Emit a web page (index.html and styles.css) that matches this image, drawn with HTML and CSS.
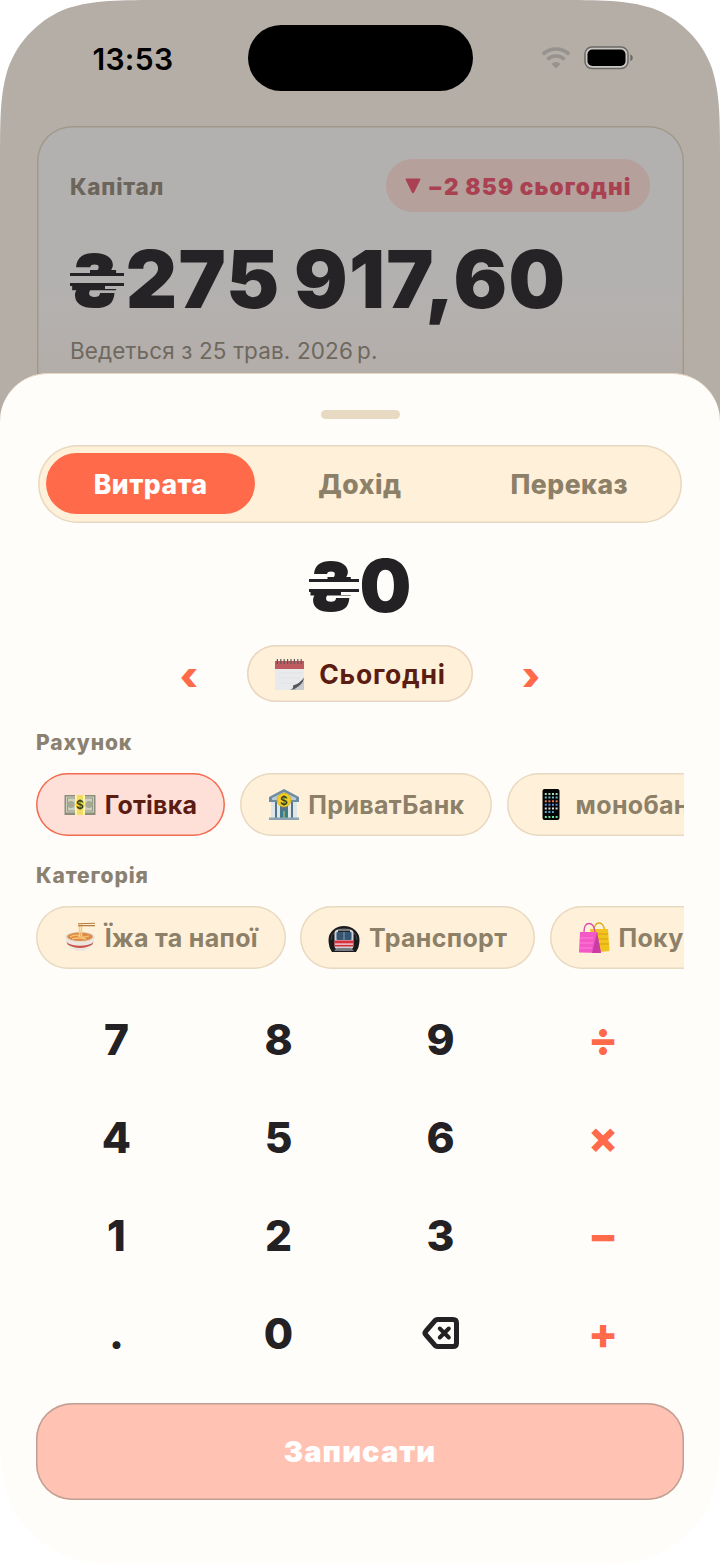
FILE: index.html
```html
<!DOCTYPE html>
<html lang="uk">
<head>
<meta charset="utf-8">
<title>Витрата</title>
<link rel="stylesheet" href="styles.css">
</head>
<body>
<div class="phone">
  <header class="status">
    <div class="time">13:53</div>
    <div class="island"></div>
    <div class="indicators">
      <svg class="wifi" width="30" height="22" viewBox="0 0 30 22" fill="none" stroke="#96928d" stroke-width="3.6"><path d="M1.700 7.300a19.500 19.500 0 0 1 26.600 0"/><path d="M6.400 12.500a12.500 12.500 0 0 1 17.200 0"/><path d="M15 21.600l-4.600-4.600a6.500 6.500 0 0 1 9.200 0z" fill="#96928d" stroke="none"/></svg>
      <svg class="battery" width="50" height="24" viewBox="0 0 50 24"><rect x="1" y="1" width="43" height="21.500" rx="7" fill="#c9c5c0" stroke="#6b6865" stroke-width="1.500"/><rect x="3.500" y="3.500" width="38" height="16.500" rx="4.800" fill="#000"/><path d="M46.300 8.300q2.500 1 2.500 3.500t-2.500 3.500z" fill="#6b6865"/></svg>
    </div>
  </header>
  <section class="capital">
    <div class="capital-head">
      <span class="capital-title">Капітал</span>
      <span class="delta"><svg width="16" height="16" viewBox="0 0 16 16"><path d="M1.500.6h13q1.300.2.7 1.500L9.200 14.300q-1.200 2-2.400 0L.8 2.100Q.2.8 1.500.6z" fill="#a94152"/></svg><span>−2 859 сьогодні</span></span>
    </div>
    <div class="capital-sum"><span class="uah"><span class="uah-sign">₴</span></span>275 917,60</div>
    <div class="since">Ведеться з 25 трав. 2026&#8239;р.</div>
  </section>
  <main class="sheet">
    <div class="handle"></div>
    <nav class="tabs">
      <button class="tab active">Витрата</button>
      <button class="tab">Дохід</button>
      <button class="tab">Переказ</button>
    </nav>
    <div class="entry"><span class="uah"><span class="uah-sign">₴</span></span>0</div>
    <div class="date-row">
      <button class="step">‹</button>
      <button class="date">
        <svg width="32" height="32" viewBox="0 0 32 32"><path d="M1 3h29v20l-9 9H1z" fill="#e9eaec"/><path d="M30 20v12H16q10-2 14-12z" fill="#d5d6d9"/><path d="M1 3h29v8H1z" fill="#bd5b60"/><path d="M4 15h24M4 20h22M4 25h16" stroke="#dfe1e4" stroke-width=".8"/><path d="M15 31.500q5 0 4-4 7-2 11-8-1 8-8 12z" fill="#55585c"/><path d="M19 31.500q7-3 11-9v9.500z" fill="#c8cacd"/><path d="M3.400 1v5M6.800 1v5M10.200 1v5M13.600 1v5M17 1v5M20.400 1v5M23.800 1v5M27.200 1v5" stroke="#665355" stroke-width="1.200"/></svg>
        <span>Сьогодні</span>
      </button>
      <button class="step">›</button>
    </div>
    <h2 class="label">Рахунок</h2>
    <div class="chips">
      <button class="chip selected">
        <svg width="32" height="32" viewBox="0 0 32 32"><rect x=".5" y="6" width="31" height="20" fill="#8c8e7c"/><rect x="2" y="7.500" width="28" height="16" fill="#cfd0bd"/><rect x="3.500" y="9" width="25" height="13" fill="none" stroke="#969985"/><circle cx="7" cy="15.500" r="3.500" fill="#a6a994"/><circle cx="25" cy="15.500" r="3.500" fill="#a6a994"/><path d="M11 6h10v20H11z" fill="#f1dc65"/><path d="M11 6h2v20h-2zM19 6h2v20h-2z" fill="#fff3ac"/><circle cx="16" cy="15.500" r="4.500" fill="#f5d835"/><text x="16" y="20" class="coin">$</text></svg>
        <span>Готівка</span>
      </button>
      <button class="chip">
        <svg width="32" height="32" viewBox="0 0 32 32"><path d="M16 0L31 8v5H1V8z" fill="#6e8da2"/><path d="M16 3l12 6v2H4V9z" fill="#b9cbd5"/><path d="M3 13h26v17H3z" fill="#54748a"/><path d="M3 13h4v16H3zM9 13h3v16H9zM20 13h3v16h-3zM25 13h4v16h-4z" fill="#e0e5e8"/><path d="M12.500 22h7v8h-7z" fill="#347f90"/><path d="M15.500 22h1v8h-1z" fill="#e7c84b"/><path d="M1 28.500h30V31H1z" fill="#8ca4b1"/><circle cx="16" cy="11" r="7" fill="#f3cc24" stroke="#caa31a" stroke-width=".6"/><text x="16" y="15.500" class="coin">$</text></svg>
        <span>ПриватБанк</span>
      </button>
      <button class="chip">
        <svg width="32" height="32" viewBox="0 0 32 32"><rect x="7.500" y="0" width="17" height="31" rx="2" fill="#050505"/><g fill="none" stroke-width="2" stroke-dasharray="2 1.600"><path d="M9.800 5h13" stroke="#a8d9ba"/><path d="M9.800 8.600h13" stroke="#6fb8c9"/><path d="M9.800 12.200h13" stroke="#e07a59"/><path d="M9.800 15.800h13" stroke="#5d8ddd"/><path d="M9.800 19.400h13" stroke="#d8ddd9"/><path d="M9.800 23h9" stroke="#5aa6c8"/><path d="M9.800 28h13" stroke="#6ce29b"/></g></svg>
        <span>монобанк</span>
      </button>
    </div>
    <h2 class="label category">Категорія</h2>
    <div class="chips">
      <button class="chip">
        <svg width="32" height="32" viewBox="0 0 32 32"><path d="M1.500 15q0 9 8 12.500l2 1.500h9l2-1.500q8-3.500 8-12.500z" fill="#ece6df"/><path d="M2.500 20q4 3.800 13.500 3.800T29.500 20l-1.200 2.600Q23 26 16 26T3.700 22.600z" fill="#c9524b"/><ellipse cx="16" cy="14.800" rx="14.500" ry="5.300" fill="#e3ded8"/><ellipse cx="16" cy="14.800" rx="12.800" ry="4.200" fill="#df8b45"/><path d="M6 15q5-3 9-1t10 0M8 17q5-2 14 0" stroke="#f4c577" stroke-width="1.300" fill="none"/><path d="M15.500 15V2.500M17.500 14V2.500" stroke="#f0d184" stroke-width="1.500"/><path d="M14 1.800l17-.5M14 3.600h17" stroke="#b87b3e" stroke-width="1.100"/></svg>
        <span>Їжа та напої</span>
      </button>
      <button class="chip">
        <svg width="32" height="32" viewBox="0 0 32 32"><path d="M.5 18a15.500 14 0 0 1 31 0q0 7-3.500 12H4Q.5 25 .5 18z" fill="#191a1c"/><path d="M3 18a13 11.500 0 0 1 26 0" stroke="#46484b" fill="none"/><rect x="6.500" y="7.500" width="19" height="20" rx="4" fill="#cbd1d6"/><rect x="8.500" y="10" width="15" height="8" rx="1" fill="#345574"/><path d="M10 8.500h12v1.500H10z" fill="#252525"/><path d="M15.500 10h1v8h-1z" fill="#8fa2b2"/><path d="M6.500 18.500h19v6h-19z" fill="#d92e3d"/><path d="M7 21.500h18v1.200H7z" fill="#eee"/><path d="M6 29l3-3h14l3 3z" fill="#777b80"/></svg>
        <span>Транспорт</span>
      </button>
      <button class="chip">
        <svg width="32" height="32" viewBox="0 0 32 32"><path d="M16 10q0-9 5-9t6 9" stroke="#ddac1b" fill="none" stroke-width="1.300"/><path d="M12 7h18l1.500 22-9 1-7-1z" fill="#f0c31d"/><path d="M12 12h18M12 17h18M12 22h19" stroke="#d99d14"/><path d="M6 10q0-8.500 5-8.500t6 8.500" stroke="#dc4fab" fill="none" stroke-width="1.300"/><path d="M2 10h17l4 21-22-.5z" fill="#f259c5"/><path d="M19 10l4 21h-9z" fill="#c83ca4"/><path d="M2 16h13M2 21h13M2 26h12" stroke="#ff7fda"/></svg>
        <span>Покупки</span>
      </button>
    </div>
    <div class="keypad">
      <button class="key">7</button><button class="key">8</button><button class="key">9</button><button class="key op">÷</button>
      <button class="key">4</button><button class="key">5</button><button class="key">6</button><button class="key op">×</button>
      <button class="key">1</button><button class="key">2</button><button class="key">3</button><button class="key op">−</button>
      <button class="key">.</button><button class="key">0</button>
      <button class="key"><svg width="38" height="34" viewBox="0 0 38 34" fill="none" stroke="#232123" stroke-linecap="round" stroke-linejoin="round"><path d="M15.500 3.500H31q3.500 0 3.500 3.500v20q0 3.500-3.500 3.500H15.500q-1.500 0-2.700-1.300L4 19q-2-2 0-4l8.800-10.200q1.200-1.300 2.700-1.300z" stroke-width="5"/><path d="M17.800 12.500l9 9M26.800 12.500l-9 9" stroke-width="4"/></svg></button>
      <button class="key op">+</button>
    </div>
    <button class="save">Записати</button>
  </main>
</div>
</body>
</html>
```
FILE: styles.css
```css
*, *::before, *::after { box-sizing: border-box; }
body { margin: 0; background: #fff; font-family: Inter, "Liberation Sans", sans-serif; }
button { font: inherit; border: 0; padding: 0; background: none; color: inherit; }
svg { display: block; flex: none; }

.phone {
  width: 720px; height: 1565px; overflow: hidden; background: linear-gradient(#b4aea7 500px, #fffdf9 500px);
  display: flex; flex-direction: column;
  clip-path: path("M165 0C117.600 0 93.800 0 68.200 8.100C40.300 18.300 18.300 40.300 8.100 68.200C0 93.800 0 117.600 0 165V1400C0 1447.400 0 1471.200 8.100 1496.800C18.300 1524.700 40.300 1546.700 68.200 1556.900C93.800 1565 117.600 1565 165 1565H555C602.400 1565 626.200 1565 651.800 1556.900C679.700 1546.700 701.700 1524.700 711.900 1496.800C720 1471.200 720 1447.400 720 1400V165C720 117.600 720 93.800 711.900 68.200C701.700 40.300 679.700 18.300 651.800 8.100C626.200 0 602.400 0 555 0Z");
}

.status { height: 126px; flex: none; display: flex; align-items: flex-start; padding-top: 25px; }
.time { width: 248px; padding-left: 92.500px; height: 67px; line-height: 68px; font-size: 30px; font-weight: 600; color: #000; letter-spacing: .3px; }
.island { width: 224.500px; height: 66px; border-radius: 33px; background: #000; }
.indicators { display: flex; align-items: center; height: 66px; padding-left: 68px; gap: 13px; }

.capital {
  height: 267px; margin: 0 36.500px -20px; flex: none; padding: 33px 33.500px 0;
  box-shadow: inset 0 0 0 1.500px #a19988; border-radius: 35px 35px 0 0;
  background: linear-gradient(#b3b1b0 60%, #b4ada8);
}
.capital-head { display: flex; justify-content: space-between; align-items: center; height: 53px; }
.capital-title { font-size: 22.500px; font-weight: 800; color: #6b655b; letter-spacing: .75px; padding-top: 1px; }
.delta {
  height: 53px; width: 264px; border-radius: 27px; background: #b5a09b; color: #a94152;
  display: flex; align-items: center; justify-content: center; gap: 7px; padding-top: 1px;
  font-size: 22.500px; font-weight: 900; letter-spacing: 1.150px; white-space: nowrap;
}
.capital-sum { margin-top: 27px; height: 80px; line-height: 80px; font-size: 79.500px; font-weight: 880; color: #252325; letter-spacing: 1.400px; word-spacing: -4px; white-space: nowrap; --surface: #b3b1b0; --line: 3px; }
.since { margin-top: 19px; height: 26px; line-height: 26px; font-size: 22.500px; color: #6e685f; letter-spacing: .130px; }

/* hryvnia sign with two thin crossbars reaching past the letter */
.uah { position: relative; display: inline-block; width: .7em; height: 1em; line-height: 1em; text-align: left; letter-spacing: 0; white-space: nowrap; }
.uah-sign { display: inline-block; font-size: .92em; vertical-align: .02em; margin-left: -.085em; }
.uah::before {
  content: ""; position: absolute; left: 0; width: .69em; top: calc(50% - .125em); height: .252em;
  background:
    linear-gradient(var(--surface), var(--surface)) 0 0 / 37% 22% no-repeat,
    linear-gradient(var(--surface), var(--surface)) 100% 100% / 36% 22% no-repeat;
}
.uah::after {
  content: ""; position: absolute; left: 0; width: .685em; top: calc(50% - .085em); height: .17em;
  background: var(--surface); border: solid #242224; border-width: var(--line) 0;
}

.sheet {
  flex: 1; position: relative; padding: 36px 36px 0; background: #fffdf9;
  border-top: 1px solid #e8d8bf; border-radius: 48px 48px 0 0;
  display: flex; flex-direction: column;
}
.handle { width: 79px; height: 9px; border-radius: 5px; background: #e8d9c2; align-self: center; flex: none; }
.tabs {
  margin: 25.500px 2px 0; height: 78px; padding: 8.500px 8px; flex: none;
  display: flex; align-items: center; box-shadow: inset 0 0 0 1.500px #e8d9c2; border-radius: 39px; background: #fff0d9;
}
.tab { flex: 1; height: 61px; border-radius: 31px; font-size: 26.500px; font-weight: 800; color: #8d8068; letter-spacing: .5px; }
.tab.active { background: #ff6b4a; color: #fff; }
.entry { height: 72px; margin-top: 26.500px; line-height: 72px; flex: none; text-align: center; font-size: 73px; font-weight: 880; color: #232123; --surface: #fffdf9; --line: 3px; }
.date-row { display: flex; align-items: center; justify-content: center; height: 57px; margin-top: 24px; flex: none; }
.step { width: 116px; height: 57px; padding-top: 3px; font-size: 39px; font-weight: 880; color: #ff6b4a; }
.date {
  width: 226px; height: 57px; box-shadow: inset 0 0 0 1.500px #e8d5c2; border-radius: 29px; background: #fff0d9;
  display: flex; align-items: center; justify-content: center; gap: 13px;
  font-size: 26.500px; font-weight: 750; color: #5b1c12; letter-spacing: .750px;
}
.label { margin: 28px 0 0; height: 26px; line-height: 26px; flex: none; font-size: 21px; font-weight: 800; color: #8a8171; letter-spacing: .900px; }
.label.category { margin-top: 27px; }
.chips { display: flex; gap: 14.500px; margin-top: 17px; height: 63px; overflow: hidden; flex: none; }
.chip {
  height: 63px; flex: none; display: flex; align-items: center; gap: 8.700px; padding: 0 28px;
  box-shadow: inset 0 0 0 1.500px #e8d9c2; border-radius: 32px; background: #fff0d9;
  font-size: 25px; font-weight: 650; color: #8d8068; letter-spacing: .320px; white-space: nowrap;
}
.chip.selected { box-shadow: inset 0 0 0 1.500px #f26c50; background: #ffe0d8; color: #5b1c12; letter-spacing: .180px; }
.coin { font-family: Inter, sans-serif; font-size: 12px; font-weight: 600; text-anchor: middle; fill: #3e3920; letter-spacing: 0; }

.keypad { display: grid; grid-template-columns: repeat(4, 162px); grid-auto-rows: 98px; margin-top: 21px; flex: none; }
.key { display: flex; align-items: center; justify-content: center; padding-right: 1px; font-size: 42.500px; font-weight: 800; color: #232123; }
.key.op { color: #ff6b4a; font-size: 44px; font-weight: 850; padding-right: 0; }
.save {
  height: 97px; margin-top: 20.500px; flex: none; box-shadow: inset 0 0 0 1.500px #bf9f94; border-radius: 36px;
  background: #ffc2b3; color: #fff; font-size: 29px; font-weight: 900; letter-spacing: 1.100px;
}
```
